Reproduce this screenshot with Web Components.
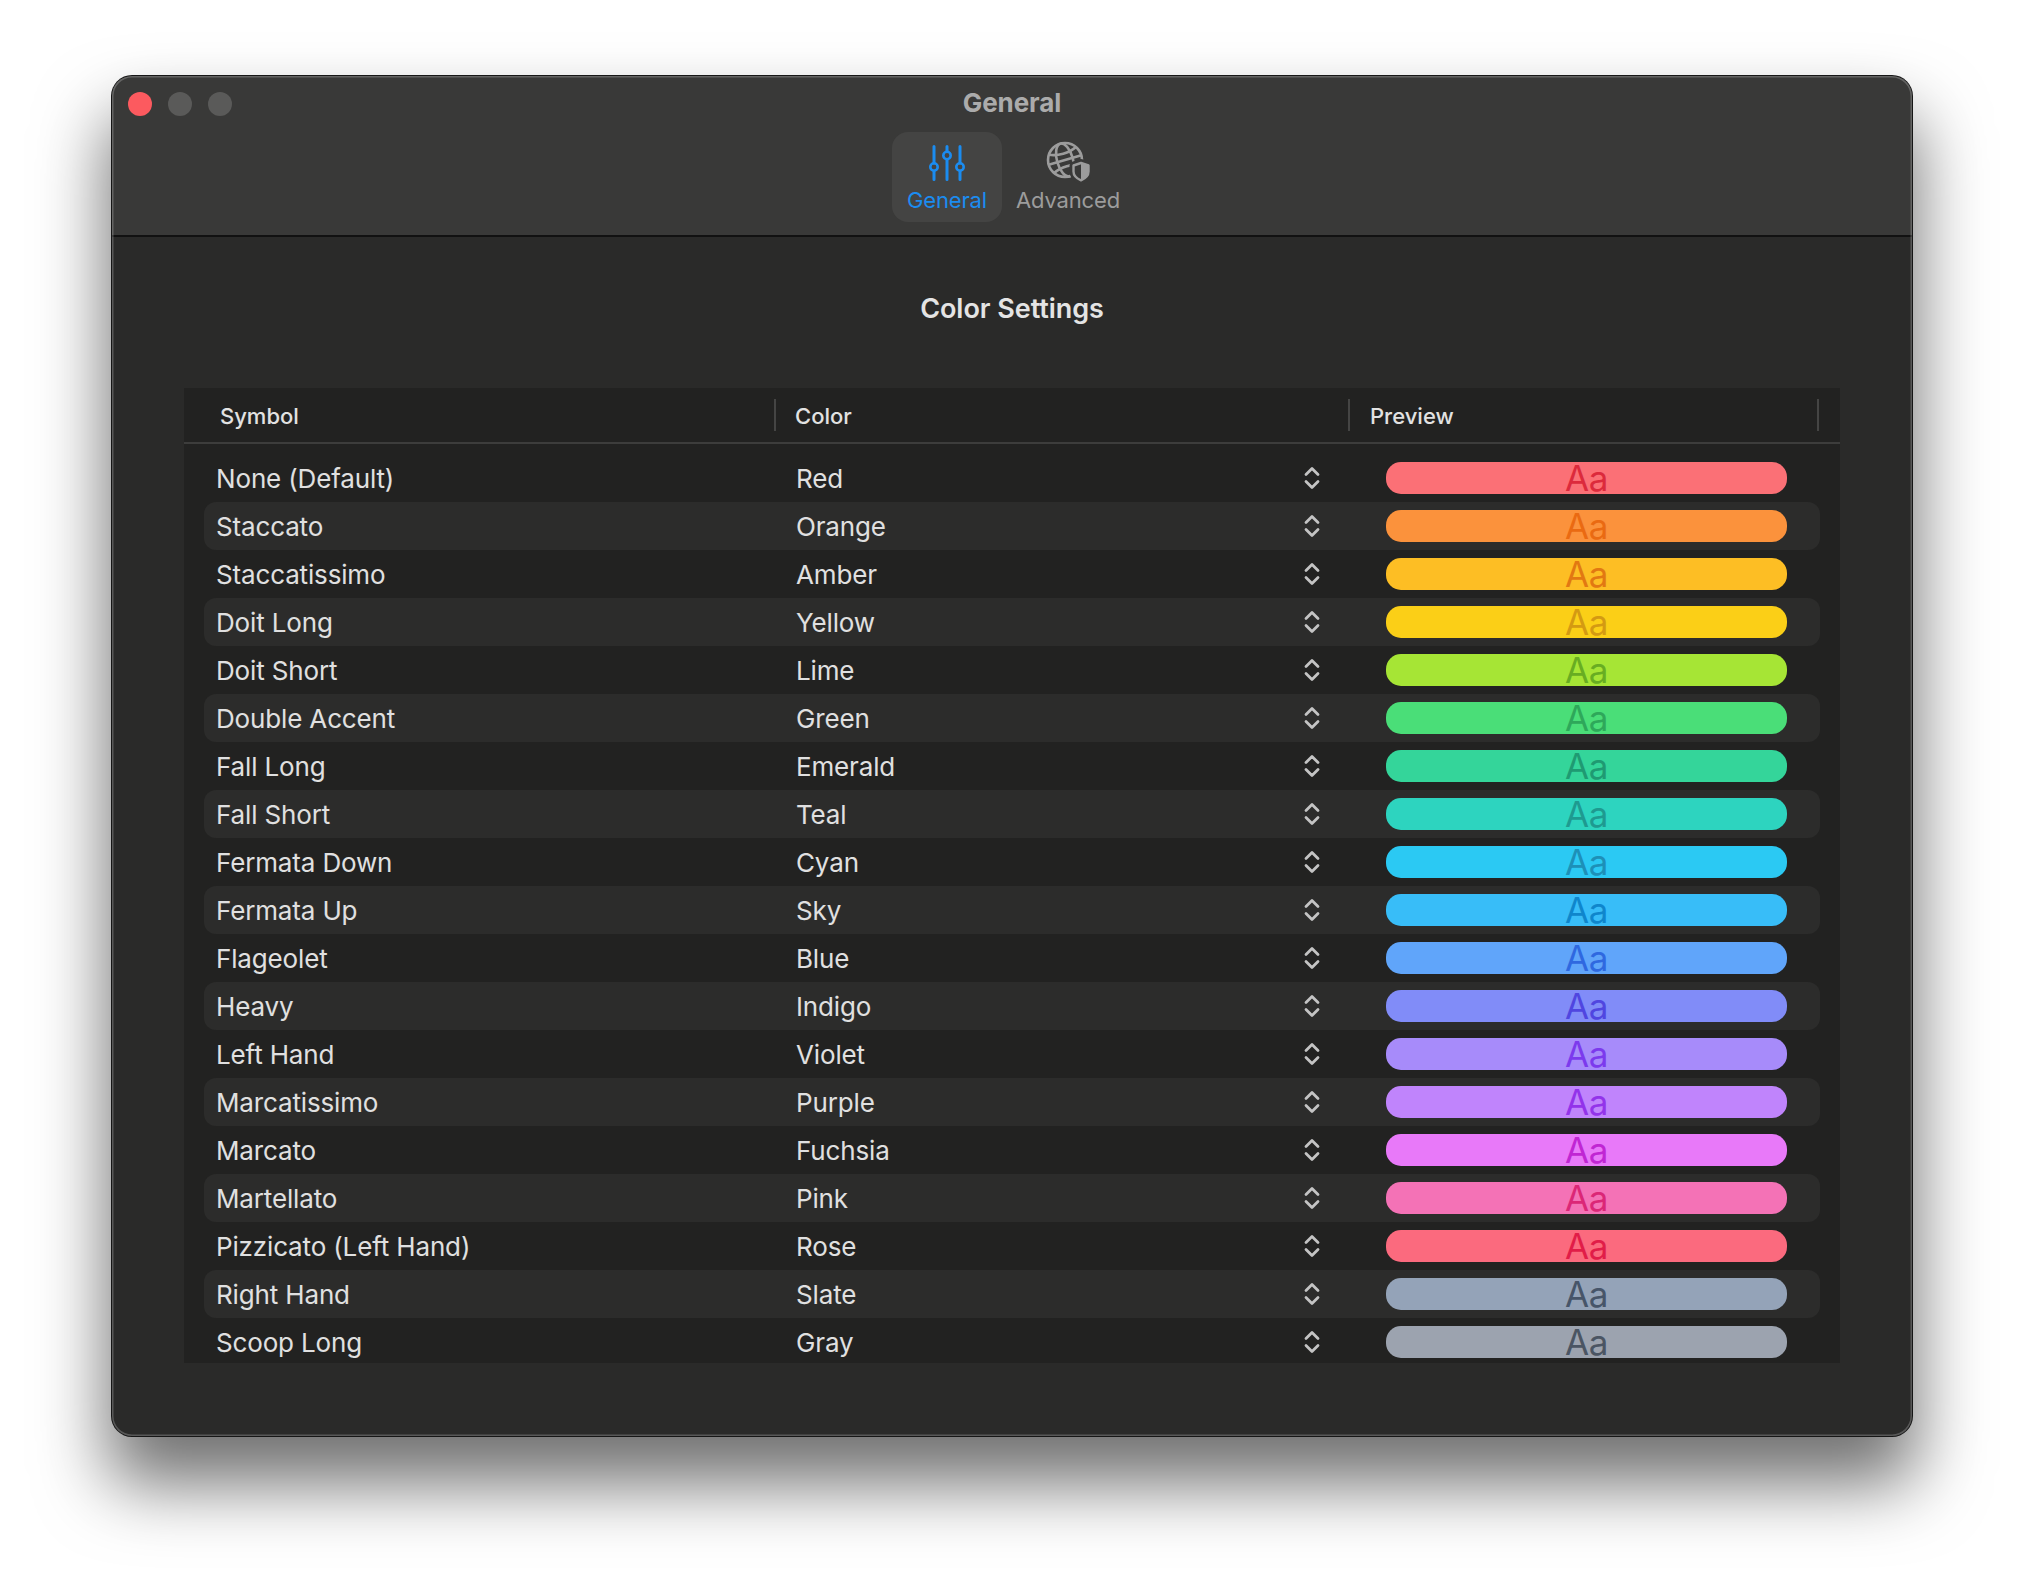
<!DOCTYPE html>
<html lang="en">
<head>
<meta charset="utf-8">
<title>General</title>
<style>
  html, body { margin: 0; background: #fff; }
  body { width: 2024px; height: 1584px; overflow: hidden; padding: 76px 0 0 112px; box-sizing: border-box; font-family: Inter, "Liberation Sans", sans-serif; }
</style>
</head>
<body>
<app-window>
  <window-toolbar slot="toolbar" heading="General">
    <toolbar-item label="General" icon="sliders" selected></toolbar-item>
    <toolbar-item label="Advanced" icon="globe"></toolbar-item>
  </window-toolbar>
  <color-settings></color-settings>
</app-window>

<script>
const ICONS = {
  sliders: `<svg width="40" height="40" viewBox="0 0 40 40" fill="none" stroke="currentColor" stroke-width="3" stroke-linecap="round">
    <path d="M7 3.500V20M7 28v8.500M20 3.500v5M20 16.500V36.500M33 3.500V20M33 28v8.500"/>
    <circle cx="7" cy="24" r="3.700" stroke-width="2.600"/><circle cx="20" cy="12.500" r="3.700" stroke-width="2.600"/><circle cx="33" cy="24" r="3.700" stroke-width="2.600"/>
  </svg>`,
  globe: `<svg width="46" height="46" viewBox="0 0 46 46" fill="none" stroke="currentColor" stroke-width="2.600">
    <circle cx="20" cy="20" r="17"/>
    <g transform="rotate(-16 20 20)">
      <ellipse cx="20" cy="20" rx="8" ry="17"/>
      <path d="M3 20h34M6 10.500c8 4 20 4 28 0M6 29.500c8-4 20-4 28 0"/>
    </g>
    <path d="M36 23l7.500 2.500v6c0 4-3.300 7-7.500 8.800c-4.200-1.800-7.500-4.800-7.500-8.800v-6z" fill="#393938" stroke="#393938" stroke-width="8" stroke-linejoin="round"/>
    <path d="M36 23l7.500 2.500v6c0 4-3.300 7-7.500 8.800c-4.200-1.800-7.500-4.800-7.500-8.800v-6z" fill="#393938" stroke-width="2.400" stroke-linejoin="round"/>
    <path d="M36 23l7.500 2.500v6c0 4-3.300 7-7.500 8.800z" fill="currentColor" stroke="none"/>
  </svg>`
};

const ROWS = [
  ['None (Default)', 'Red', '#fb7076', '#dc2a3c'],
  ['Staccato', 'Orange', '#fb923c', '#ea6a12'],
  ['Staccatissimo', 'Amber', '#fdbe24', '#e27812'],
  ['Doit Long', 'Yellow', '#fbcf17', '#d49a12'],
  ['Doit Short', 'Lime', '#a6e535', '#68ad22'],
  ['Double Accent', 'Green', '#4ade78', '#2ea85a'],
  ['Fall Long', 'Emerald', '#34d59a', '#1f9a72'],
  ['Fall Short', 'Teal', '#2dd4bf', '#1e9a90'],
  ['Fermata Down', 'Cyan', '#2bc9f3', '#1d90b8'],
  ['Fermata Up', 'Sky', '#38bdf8', '#0f86cc'],
  ['Flageolet', 'Blue', '#60a5fa', '#2f68e0'],
  ['Heavy', 'Indigo', '#818cf8', '#5046e0'],
  ['Left Hand', 'Violet', '#a78bfa', '#7c3aed'],
  ['Marcatissimo', 'Purple', '#c084fc', '#9333ea'],
  ['Marcato', 'Fuchsia', '#e879f9', '#c026d3'],
  ['Martellato', 'Pink', '#f472b6', '#db2777'],
  ['Pizzicato (Left Hand)', 'Rose', '#fb6a7e', '#e11d48'],
  ['Right Hand', 'Slate', '#94a3b8', '#475569'],
  ['Scoop Long', 'Gray', '#9ca3af', '#4b5563']
];

class AppWindow extends HTMLElement {
  constructor() {
    super();
    this.attachShadow({ mode: 'open' });
    this.shadowRoot.innerHTML = `
      <style>
        :host {
          display: flex;
          flex-direction: column;
          width: 1800px;
          height: 1360px;
          border-radius: 20px;
          overflow: hidden;
          background: #2a2a29;
          color: #e2e2e2;
          box-shadow: 0 0 0 1px #161616, 0 44px 70px 4px rgba(0,0,0,.56);
        }
        .frame { position: absolute; width: 1800px; height: 1360px; border-radius: 20px; pointer-events: none; box-shadow: inset 0 0 0 1.5px rgba(255,255,255,.22); z-index: 2; }
      </style>
      <div class="frame"></div>
      <slot name="toolbar"></slot>
      <slot></slot>
    `;
  }
}

class WindowToolbar extends HTMLElement {
  constructor() {
    super();
    this.attachShadow({ mode: 'open' });
  }
  connectedCallback() {
    const heading = this.getAttribute('heading') || '';
    this.shadowRoot.innerHTML = `
      <style>
        :host {
          display: grid;
          grid-template-columns: 1fr auto 1fr;
          height: 161px;
          box-sizing: border-box;
          background: #393938;
          border-bottom: 2px solid #111;
          padding-top: 16px;
          flex: none;
        }
        .lights { display: flex; gap: 16px; padding: 0 0 0 16px; height: 24px; }
        .lights span { width: 24px; height: 24px; border-radius: 50%; background: #5a5a59; }
        .lights span:first-child { background: #fc5a5f; }
        .middle { display: flex; flex-direction: column; align-items: center; }
        h1 { margin: -1px 0 0; font: 700 26px/24px Inter, sans-serif; color: #ababab; letter-spacing: -.1px; }
        .items { display: flex; gap: 2px; margin-top: 17px; }
      </style>
      <div class="lights"><span></span><span></span><span></span></div>
      <div class="middle">
        <h1>${heading}</h1>
        <div class="items"><slot></slot></div>
      </div>
    `;
  }
}

class ToolbarItem extends HTMLElement {
  constructor() {
    super();
    this.attachShadow({ mode: 'open' });
  }
  connectedCallback() {
    const label = this.getAttribute('label');
    const icon = this.getAttribute('icon');
    this.shadowRoot.innerHTML = `
      <style>
        :host {
          display: flex;
          flex-direction: column;
          align-items: center;
          width: 128px;
          height: 90px;
          border-radius: 16px;
          color: #9c9c9c;
          font: 400 22px/26px Inter, sans-serif;
          letter-spacing: -.15px;
        }
        :host([selected]) { background: #444443; color: #1b8cf0; width: 110px; }
        .icon { height: 52px; display: flex; align-items: center; justify-content: center; margin-top: 5px; }
        svg { display: block; }
        .label { margin-top: -2.500px; white-space: nowrap; }
      </style>
      <div class="icon">${ICONS[icon]}</div>
      <div class="label">${label}</div>
    `;
  }
}

class ColorSettings extends HTMLElement {
  constructor() {
    super();
    this.attachShadow({ mode: 'open' });
    this.shadowRoot.innerHTML = `
      <style>
        :host { display: flex; flex-direction: column; align-items: center; padding: 56px 72px 0; }
        h2 { margin: 0 0 63px; font: 600 27px/32px Inter, sans-serif; color: #e4e4e4; letter-spacing: -.05px; }
        .table { width: 1656px; height: 975px; background: #222221; }
        .head {
          display: grid;
          grid-template-columns: 592px 574px 469px;
          height: 54px;
          border-bottom: 2px solid #3d3d3c;
          font: 450 22px/34px Inter, sans-serif;
          color: #e2e2e2;
          align-items: center;
        }
        .head div { height: 32px; border-right: 2px solid #454544; box-sizing: border-box; }
        .head div:nth-child(1) { padding-left: 36px; }
        .head div:nth-child(2) { padding-left: 19px; }
        .head div:nth-child(3) { padding-left: 20px; }
        .rows { display: block; margin: 10px 20px 0; }
      </style>
      <h2>Color Settings</h2>
      <div class="table">
        <div class="head"><div>Symbol</div><div>Color</div><div>Preview</div></div>
        <div class="rows"></div>
      </div>
    `;
    const rows = this.shadowRoot.querySelector('.rows');
    ROWS.forEach(([symbol, color, bg, fg]) => {
      const row = document.createElement('color-row');
      row.setAttribute('symbol', symbol);
      row.setAttribute('color', color);
      row.setAttribute('bg', bg);
      row.setAttribute('fg', fg);
      rows.appendChild(row);
    });
  }
}

class ColorRow extends HTMLElement {
  constructor() {
    super();
    this.attachShadow({ mode: 'open' });
  }
  connectedCallback() {
    const a = n => this.getAttribute(n);
    this.shadowRoot.innerHTML = `
      <style>
        :host {
          display: grid;
          grid-template-columns: 580px 495px 42px 454px;
          height: 48px;
          align-items: center;
          padding-left: 12px;
          box-sizing: border-box;
          border-radius: 12px;
          font: 400 26px/50px Inter, sans-serif;
          color: #e0e0e0;
          letter-spacing: -.15px;
        }
        :host(:nth-child(even)) { background: #2c2c2b; }
        .symbol, .color { height: 48px; }
        .stepper { display: flex; justify-content: center; color: #c4c4c4; }
        svg { display: block; }
        .pill {
          width: 401px;
          height: 32px;
          margin-left: 53px;
          border-radius: 15px;
          text-align: center;
          font: 400 35px/33px Inter, sans-serif;
          letter-spacing: -.5px;
        }
      </style>
      <div class="symbol">${a('symbol')}</div>
      <div class="color">${a('color')}</div>
      <div class="stepper"><svg width="16" height="24" viewBox="0 0 16 24" fill="none" stroke="currentColor" stroke-width="2.800" stroke-linecap="round" stroke-linejoin="round"><path d="M2 8.500L8 2.500L14 8.500M2 15.500L8 21.500L14 15.500"/></svg></div>
      <div class="pill" style="background:${a('bg')};color:${a('fg')}">Aa</div>
    `;
  }
}

customElements.define('app-window', AppWindow);
customElements.define('window-toolbar', WindowToolbar);
customElements.define('toolbar-item', ToolbarItem);
customElements.define('color-settings', ColorSettings);
customElements.define('color-row', ColorRow);
</script>
</body>
</html>
